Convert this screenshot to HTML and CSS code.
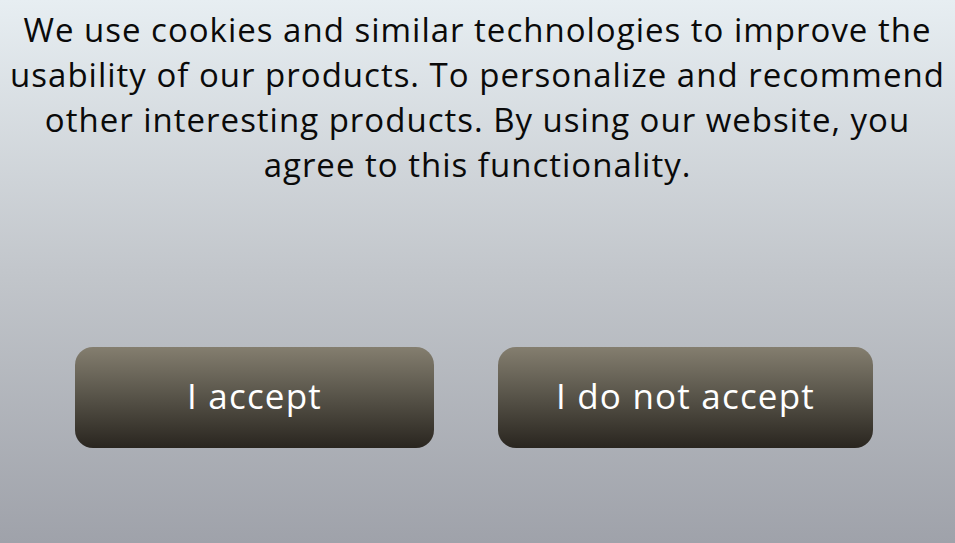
FILE: index.html
```html
<!DOCTYPE html>
<html lang="en">
<head>
<meta charset="utf-8">
<title>Cookies</title>
<link rel="stylesheet" href="styles.css">
</head>
<body>
<div class="consent">
  <p class="message">We use cookies and similar technologies to improve the<br>usability of our products. To personalize and recommend<br>other interesting products. By using our website, you<br>agree to this functionality.</p>
  <div class="actions">
    <button class="btn btn-accept">I accept</button>
    <button class="btn btn-decline">I do not accept</button>
  </div>
</div>
</body>
</html>
```

FILE: styles.css
```css
html, body {
  margin: 0;
  height: 100%;
}
body {
  background: linear-gradient(180deg, #e7eef2 0%, #c2c6cb 50%, #9fa2aa 100%);
  font-family: "Open Sans", "Liberation Sans", sans-serif;
  color: #0a0a0a;
}
.consent {
  display: flex;
  flex-direction: column;
  align-items: center;
  padding-top: 7px;
}
.message {
  margin: 0;
  font-size: 33px;
  line-height: 45px;
  text-align: center;
  letter-spacing: 1px;
  white-space: nowrap;
}
.actions {
  display: flex;
  gap: 64px;
  margin-top: 160px;
  margin-right: 7px;
}
.btn {
  height: 101px;
  border: none;
  border-radius: 18px;
  background: linear-gradient(180deg, #847e6f 0%, #5b574c 45%, #29251f 100%);
  color: #fff;
  font-family: "Open Sans", "Liberation Sans", sans-serif;
  font-size: 35px;
  letter-spacing: 1.2px;
  padding: 0 0 4px;
}
.btn-accept { width: 359px; }
.btn-decline { width: 375px; }
```
